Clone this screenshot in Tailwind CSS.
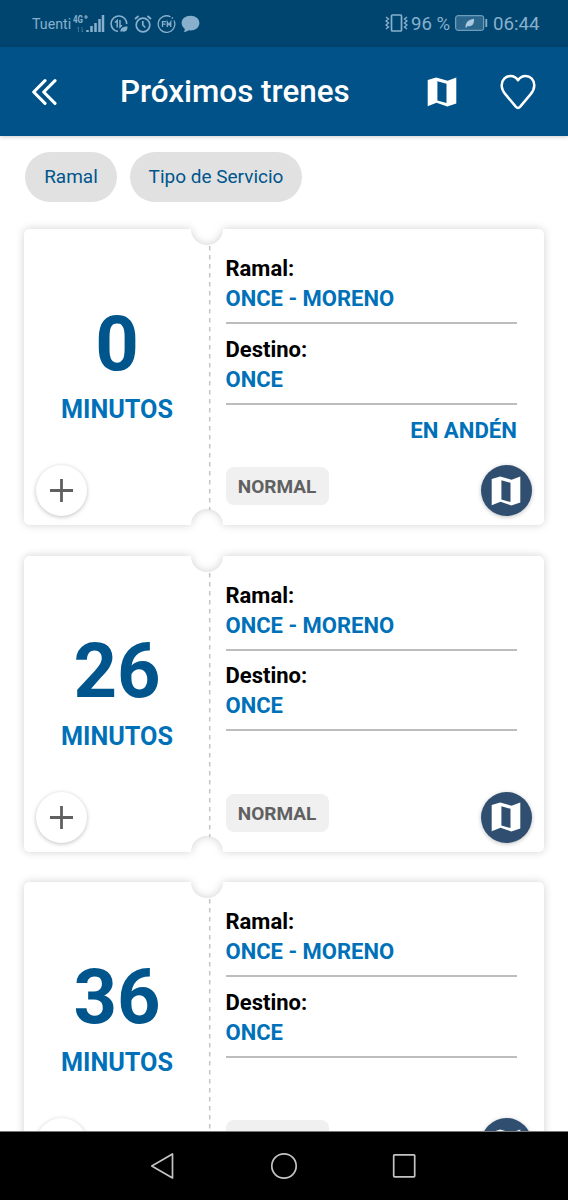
<!DOCTYPE html>
<html lang="es">
<head>
<meta charset="utf-8">
<title>Próximos trenes</title>
<script src="https://cdn.jsdelivr.net/npm/@tailwindcss/browser@4"></script>
</head>
<body class="bg-white">
<svg class="hidden">
  <symbol id="map" viewBox="0 0 30 30"><path fill="currentColor" fill-rule="evenodd" d="M.7 3.1 9.2.6 20.6 3.7 29.3.4V26.4L20.3 29.4 9.5 25.8.7 29.2ZM10.4 4.2V23.4L19.5 26.1V6.8Z"/></symbol>
</svg>
<div class="flex flex-col w-[568px] h-[1200px] overflow-hidden bg-white font-[Roboto,sans-serif]">
  <div class="flex shrink-0 items-center h-[47px] bg-[#00456f] text-[#88b0cd] pl-8 pr-[28px]">
    <span class="mt-[2px] text-[14.200px] leading-none w-[39px] whitespace-nowrap">Tuenti</span>
    <svg class="ml-[2px] w-[32px] h-[24px]" viewBox="0 0 32 24">
      <text x="0" y="11" font-size="10.5" font-weight="700" textLength="10" lengthAdjust="spacingAndGlyphs" fill="currentColor">4G</text>
      <path d="M11 5h4M13 3v4" stroke="currentColor" stroke-width="1.2"/>
      <path d="M5.500 20v-5l-1.500 1.500M9 15v5l1.500-1.500" fill="none" stroke="currentColor" stroke-width="1" opacity=".4"/>
      <path d="M14.500 20v-2M18.500 20v-6M22.500 20v-9M26.500 20v-13M30 20V3" stroke="currentColor" stroke-width="2.500"/>
    </svg>
    <svg class="ml-[5px] w-[18px] h-[18px]" viewBox="0 0 18 18" fill="none" stroke="currentColor" stroke-width="1.600">
      <path d="M8 16.500A7.800 7.800 0 1 1 16.700 9"/><path d="M7.200 12.500V5.500L5 7.500M10 5v7l2-1.800" stroke-width="1.500"/><path d="M10.500 17c-.5-4 2.500-5.500 7-5.500.2 3.500-1.700 6.200-5.500 4.800z" fill="currentColor" stroke="none"/>
    </svg>
    <svg class="ml-[6px] w-[18px] h-[18px]" viewBox="0 0 18 18" fill="none" stroke="currentColor" stroke-width="1.700">
      <circle cx="9" cy="10" r="6.800"/><path d="M8.800 6v4l2.500 2.500M1 4 4.500 1M17 4 13.500 1"/>
    </svg>
    <svg class="ml-[5px] w-[19px] h-[18px]" viewBox="0 0 19 18" fill="none" stroke="currentColor">
      <path stroke-width="1.300" d="M13.500 1.800A8.300 8.300 0 1 0 17 5.500"/><circle cx="15.300" cy="3" r=".5"/>
      <path d="M5.500 12V6.700h3.500M5.500 9.200h3M10.300 12V7l1.700 3 1.700-3v5" stroke-width="1.300"/>
    </svg>
    <svg class="ml-[5px] w-[19px] h-[18px]" viewBox="0 0 19 18" fill="currentColor"><path d="M9.500.7C4.500.7.6 3.700.6 8c0 2.500 1.300 4.500 3.300 5.900-.1 1.200-.6 2.200-1.300 3.100 2.200 0 3.700-.6 5-1.700 6 .7 10.800-2.300 10.800-7.300 0-4.300-3.900-7.300-8.900-7.300z"/></svg>
    <div class="ml-auto flex items-center">
      <svg class="w-[23px] h-[18px]" viewBox="0 0 23 18" fill="none" stroke="currentColor"><rect x="6.500" y="1" width="10" height="16" rx="1" stroke-width="1.700"/><path d="M1 3l2.500 2L1 7l2.500 2L1 11l2.500 2L1 15M22 3l-2.500 2L22 7l-2.500 2L22 11l-2.500 2L22 15" stroke-width="1.400"/></svg>
      <span class="ml-[3px] mt-[2px] w-[39px] text-[18.600px] leading-none whitespace-nowrap">96 %</span>
      <svg class="ml-[5px] w-[33px] h-[16px]" viewBox="0 0 33 16"><rect x=".7" y=".7" width="28" height="14.600" rx="2" fill="#2b668c" stroke="currentColor"/><path d="M10.500 12.500c0-4.500 2-7.500 8.500-8.700.3 5-1.500 8.300-6.500 7.200l-1.200 1.700z" fill="#a9c9de"/><path d="M31.300 4v8" stroke="currentColor" stroke-width="1.800"/></svg>
      <span class="ml-[5px] mt-[2px] w-[47px] text-[18.700px] leading-none whitespace-nowrap">06:44</span>
    </div>
  </div>
  <header class="relative z-10 flex shrink-0 items-center h-[89px] bg-[#005288] text-white pl-8 pr-[32px] shadow-[0_1px_4px_rgba(0,0,0,0.2)]">
    <svg class="w-[25px] h-[26px]" viewBox="0 0 25 26" fill="none" stroke="currentColor" stroke-width="3.100" stroke-linecap="round" stroke-linejoin="round"><path d="M13 1.700 1.700 13 13 24.300M23 1.700 11.700 13 23 24.300"/></svg>
    <h1 class="ml-[63px] text-[31.400px] font-medium leading-none whitespace-nowrap">Próximos trenes</h1>
    <svg class="ml-auto w-[30px] h-[30px]"><use href="#map"/></svg>
    <svg class="ml-[43px] w-[36px] h-[36px]" viewBox="0 0 36 36" fill="none" stroke="currentColor" stroke-width="2.500" stroke-linejoin="round"><path d="M18 6.300C20 3.200 23 2 25.500 2c5 0 8.800 4 8.800 9.200 0 3.800-1.300 6.300-4 9.400L20.200 32.600c-1.500 1.700-2.900 1.700-4.400 0L5.700 20.600C3 17.500 1.700 15 1.700 11.200 1.700 6 5.500 2 10.500 2c2.500 0 5.500 1.200 7.500 4.300z"/></svg>
  </header>
  <main class="flex flex-col flex-1 min-h-0 overflow-hidden">
    <div class="flex shrink-0 gap-[13px] pl-[25px] pt-4 text-[19px] text-[#00558d]">
      <span class="flex items-center justify-center w-[92px] h-[50px] pt-px rounded-full bg-[#e1e1e1]">Ramal</span>
      <span class="flex items-center justify-center w-[172px] h-[50px] pt-px rounded-full bg-[#e1e1e1] whitespace-nowrap">Tipo de Servicio</span>
    </div>
    <div id="list" class="flex flex-col gap-[30.400px] pl-6 pr-6 pt-[27.300px]"></div>
  </main>
  <nav class="flex shrink-0 items-center h-[69px] border-t border-[#777] bg-black text-[#c4c4c4]">
    <svg class="ml-[150px] w-[26px] h-[28px]" viewBox="0 0 26 28" fill="none" stroke="currentColor" stroke-width="1.700" stroke-linejoin="round"><path d="M1.800 14 22.500 2v24z"/></svg>
    <svg class="ml-[94px] w-[28px] h-[28px]" viewBox="0 0 28 28" fill="none" stroke="currentColor" stroke-width="1.700"><circle cx="14" cy="14" r="12.200"/></svg>
    <svg class="ml-[93px] w-[26px] h-[26px]" viewBox="0 0 26 26" fill="none" stroke="currentColor" stroke-width="1.700"><rect x="2.700" y="1.800" width="21" height="22" rx=".8"/></svg>
  </nav>
</div>
<script>
const card = (min, status) => `
<article class="relative flex shrink-0 w-[520px] h-[296px]">
  <div class="absolute inset-0 [filter:drop-shadow(0_0_4px_rgba(0,0,0,0.18))]">
    <div class="w-full h-full rounded-[5px] bg-white [mask:radial-gradient(circle_at_183px_0px,transparent_15.5px,black_16.5px)_top/100%_51%_no-repeat,radial-gradient(circle_at_183px_100%,transparent_15.5px,black_16.5px)_bottom/100%_51%_no-repeat]"></div>
  </div>
  <div class="relative flex flex-col w-[186px] shrink-0">
    <div class="mt-[75px] text-center text-[76px] leading-[80px] font-bold text-[#00558d]">${min}</div>
    <div class="mt-[11px] text-center text-[25.200px] leading-[30px] font-bold text-[#0071b9]">MINUTOS</div>
    <div class="mt-auto mb-[9px] ml-3 flex items-center justify-center w-[51px] h-[51px] rounded-full bg-white shadow-[0_1px_4px_rgba(0,0,0,0.25)]">
      <svg class="w-[23px] h-[23px]" viewBox="0 0 23 23" stroke="#606060" stroke-width="2.800"><path d="M11.500 0v23M0 11.500h23"/></svg>
    </div>
  </div>
  <svg class="absolute left-[184px] top-0 w-[4px] h-[296px]" stroke="#c4c4c4" stroke-width="1.500"><path d="M1.700 17V281" stroke-dasharray="4.500 4.500"/></svg>
  <div class="relative flex flex-col flex-1 pl-[15.500px] pr-3 text-[22px] leading-[30px] font-bold">
    <div class="mr-[15px] pt-[25px] pb-[8px] border-b-2 border-[#bdbdbd]"><p class="text-black">Ramal:</p><p class="text-[#0071b9]">ONCE - MORENO</p></div>
    <div class="mr-[15px] pt-[10.500px] pb-[8px] border-b-2 border-[#bdbdbd]"><p class="text-black">Destino:</p><p class="text-[#0071b9]">ONCE</p></div>
    <p class="mr-[15px] mt-[10.500px] text-right text-[22.200px] text-[#0071b9]">${status}</p>
    <div class="mt-auto mb-[9px] flex items-center justify-between h-[51px]">
      <span class="mb-[9px] pt-[2px] flex items-center justify-center w-[103px] h-[38px] rounded-[8px] bg-[#f0f0f0] text-[19px] text-[#606060]">NORMAL</span>
      <span class="flex items-center justify-center w-[51px] h-[51px] pr-px rounded-full bg-[#304f70] text-white shadow-[0_1px_4px_rgba(0,0,0,0.25)]"><svg class="w-[30px] h-[30px]"><use href="#map"/></svg></span>
    </div>
  </div>
</article>`;
document.getElementById('list').innerHTML = card('0', 'EN ANDÉN') + card('26', '') + card('36', '');
</script>
</body>
</html>
